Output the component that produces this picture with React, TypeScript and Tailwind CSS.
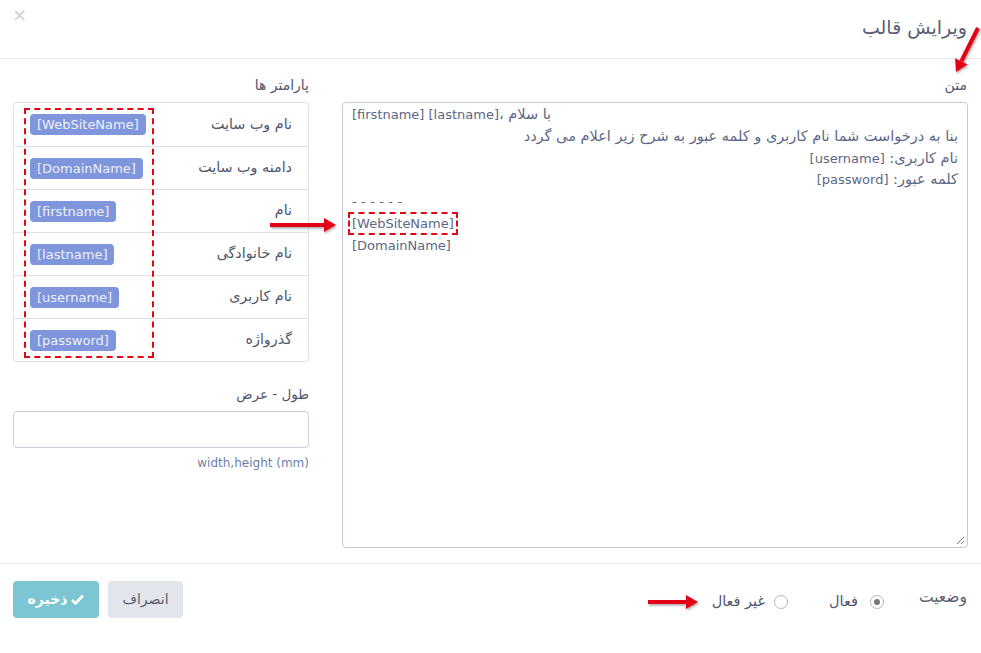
import React from "react";

const rows = [
  { label: "نام وب سایت", tag: "[WebSiteName]" },
  { label: "دامنه وب سایت", tag: "[DomainName]" },
  { label: "نام", tag: "[firstname]" },
  { label: "نام خانوادگی", tag: "[lastname]" },
  { label: "نام کاربری", tag: "[username]" },
  { label: "گذرواژه", tag: "[password]" },
];

function RedArrow({ className, x1, y1, x2, y2, w, h }: { className: string; x1: number; y1: number; x2: number; y2: number; w: number; h: number }) {
  const ang = Math.atan2(y2 - y1, x2 - x1);
  const hl = 12;
  const hw = 7;
  const bx = x2 - hl * Math.cos(ang);
  const by = y2 - hl * Math.sin(ang);
  const px = -Math.sin(ang) * hw;
  const py = Math.cos(ang) * hw;
  return (
    <svg className={className} width={w} height={h} viewBox={`0 0 ${w} ${h}`}>
      <defs>
        <filter id={`s${x1}${y1}`} x="-30%" y="-30%" width="160%" height="160%">
          <feDropShadow dx="1" dy="1.5" stdDeviation="1.2" floodColor="#000" floodOpacity="0.35" />
        </filter>
      </defs>
      <g filter={`url(#s${x1}${y1})`}>
        <line x1={x1} y1={y1} x2={bx} y2={by} stroke="#e30613" strokeWidth="4" />
        <polygon points={`${x2},${y2} ${bx + px},${by + py} ${bx - px},${by - py}`} fill="#e30613" />
      </g>
    </svg>
  );
}

export default function App() {
  return (
    <div dir="rtl" className="relative w-[981px] h-[653px] bg-white font-['DejaVu_Sans',sans-serif] text-[13px] text-[#50566b] overflow-hidden">
      {/* header */}
      <div className="h-[59px] border-b border-[#e9ebef] flex items-center justify-between pr-[14px] pl-[12px]">
        <div className="text-[19px] text-[#5a6072] pb-[4px]">ویرایش قالب</div>
        <div className="text-[18px] text-[#cfcfcf] self-start mt-[6px] leading-none">×</div>
      </div>

      {/* body */}
      <div className="flex gap-[33px] pr-[13px] pl-[13px] pt-[16px] pb-[15px] border-b border-[#e9ebef]">
        {/* text column */}
        <div className="w-[626px] flex flex-col">
          <div className="h-[20px] leading-[20px] mb-[7px] pr-[1px] text-[14px]">متن</div>
          <div className="relative h-[446px] border border-[#c6c9dc] rounded-[4px] px-[9px] pt-[1px] leading-[21.8px] text-[#5c6785]">
            <div dir="rtl" className="h-[21.8px] text-left">
              <span className="text-[14.5px]">با سلام ،</span>
              <span dir="ltr">[firstname] [lastname]</span>
            </div>
            <div dir="rtl" className="h-[21.8px] text-right text-[14.5px]">بنا به درخواست شما نام کاربری و کلمه عبور به شرح زیر اعلام می گردد</div>
            <div dir="rtl" className="h-[21.8px] text-right">
              <span className="text-[14.5px]">نام کاربری: </span>
              <span dir="ltr">[username]</span>
            </div>
            <div dir="rtl" className="h-[21.8px] text-right">
              <span className="text-[14.5px]">کلمه عبور: </span>
              <span dir="ltr">[password]</span>
            </div>
            <div dir="ltr" className="h-[21.8px] text-left tracking-[4.4px]">------</div>
            <div dir="ltr" className="h-[21.8px] text-left">
              <span className="outline-2 outline-dashed outline-[#e30613] outline-offset-[2px]">[WebSiteName]</span>
            </div>
            <div dir="ltr" className="h-[21.8px] text-left">[DomainName]</div>
            <svg className="absolute right-[2px] bottom-[2px]" width="10" height="10" viewBox="0 0 10 10">
              <line x1="9" y1="2" x2="2" y2="9" stroke="#777" strokeWidth="1" />
              <line x1="9" y1="6" x2="6" y2="9" stroke="#777" strokeWidth="1" />
            </svg>
          </div>
        </div>

        {/* params column */}
        <div className="w-[296px] flex flex-col">
          <div className="h-[20px] leading-[20px] mb-[7px] text-[14px]">پارامتر ها</div>
          <div className="relative border border-[#dfe1e8] rounded-[4px]">
            {rows.map((r, i) => (
              <div key={i} className={`h-[43px] flex items-center justify-between pr-[16px] pl-[16px] ${i > 0 ? "border-t border-[#dfe1e8]" : ""}`}>
                <span className="text-[#50566b] text-[14.3px]">{r.label}</span>
                <span dir="ltr" className="h-[21px] leading-[21px] px-[7px] rounded-[4px] bg-[#7f95dc] text-[#eef1fb]">{r.tag}</span>
              </div>
            ))}
            <div className="absolute left-[10px] top-[5px] w-[130px] h-[250px] border-2 border-dashed border-[#e30613]"></div>
          </div>
          <div className="h-[20px] leading-[20px] mt-[22px] mb-[7px] text-[13.5px]">طول - عرض</div>
          <div className="h-[37px] border border-[#c9cde0] rounded-[4px]"></div>
          <div dir="ltr" className="text-right text-[12px] text-[#6e7ea8] mt-[6px] leading-[18px]">width,height (mm)</div>
        </div>
      </div>

      {/* footer */}
      <div className="flex items-center justify-between pr-[14px] pl-[13px] pt-[17px]">
        <div className="flex items-center pt-[5px]">
          <div className="text-[#5a6072] text-[15.5px] pb-[9px]">وضعیت</div>
          <label className="flex items-center mr-[35px] gap-[12px]">
            <span className="w-[14px] h-[14px] rounded-full border border-[#b9b9b9] flex items-center justify-center">
              <span className="w-[6px] h-[6px] rounded-full bg-[#777]"></span>
            </span>
            <span className="text-[#50566b] text-[14.5px]">فعال</span>
          </label>
          <label className="flex items-center mr-[41px] gap-[9px]">
            <span className="w-[14px] h-[14px] rounded-full border border-[#b9b9b9]"></span>
            <span className="text-[#50566b] text-[14.5px]">غیر فعال</span>
          </label>
        </div>
        <div className="flex items-center gap-[9px]">
          <button className="h-[37px] w-[75px] rounded-[4px] bg-[#e3e5ec] text-[#5a5f6e] text-[14px]">انصراف</button>
          <button className="h-[37px] w-[86px] rounded-[4px] bg-[#7cc6d3] text-white text-[14px] font-bold flex items-center justify-center gap-[4px]">
            <svg width="13" height="11" viewBox="0 0 13 11">
              <path d="M1 6 L4.5 9.5 L12 1.5" stroke="#fff" strokeWidth="2.6" fill="none" />
            </svg>
            <span>ذخیره</span>
          </button>
        </div>
      </div>

      {/* annotation arrows */}
      <RedArrow className="absolute left-[950px] top-[24px]" w={34} h={54} x1={28} y1={4} x2={6} y2={48} />
      <RedArrow className="absolute left-[266px] top-[214px]" w={74} h={26} x1={4} y1={11} x2={70} y2={11} />
      <RedArrow className="absolute left-[644px] top-[590px]" w={58} h={26} x1={4} y1={12} x2={54} y2={12} />
    </div>
  );
}
